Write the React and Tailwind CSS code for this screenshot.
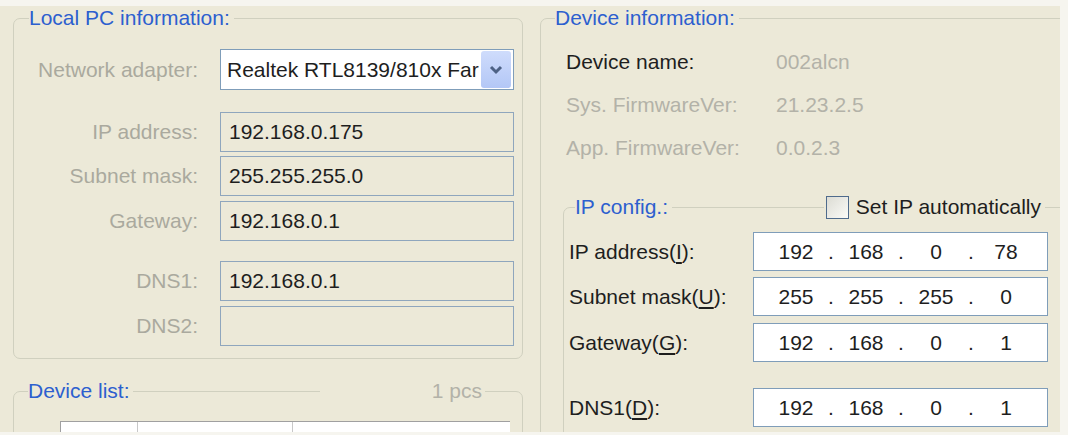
import React from "react";

function IpBox({ parts }) {
  return (
    <div className="ml-0 w-[295px] h-[39px] bg-white border border-[#7f9db9] flex items-center pl-[15px] text-[#1e1e1e]">
      <span className="w-[54px] text-center">{parts[0]}</span>
      <span className="w-[16px] text-center">.</span>
      <span className="w-[54px] text-center">{parts[1]}</span>
      <span className="w-[16px] text-center">.</span>
      <span className="w-[54px] text-center">{parts[2]}</span>
      <span className="w-[16px] text-center">.</span>
      <span className="w-[54px] text-center">{parts[3]}</span>
    </div>
  );
}

function LeftRow({ label, value, className = "" }) {
  return (
    <div className={"flex items-center " + className}>
      <span className="w-[184px] text-right text-[#aaa99e]">{label}</span>
      <div className="ml-[22px] w-[294px] h-[40px] border border-[#8fa6bd] bg-[#ECE9D8] flex items-center pl-[8px] text-[#1e1e1e]">
        {value}
      </div>
    </div>
  );
}

function IpRow({ label, mn, rest, parts, className = "" }) {
  return (
    <div className={"flex items-center " + className}>
      <span className="w-[184px] text-[#1e1e1e]">
        {label}
        <u className="underline-offset-[3px]">{mn}</u>
        {rest}
      </span>
      <IpBox parts={parts} />
    </div>
  );
}

export default function App() {
  return (
    <div className="w-[1068px] h-[435px] bg-[#f6f5ef] overflow-hidden font-['Liberation_Sans',Arial,sans-serif] text-[21px] leading-[24px]">
      <div className="mt-[6px] w-[1060px] h-[426px] bg-[#ECE9D8] overflow-hidden flex pl-[13px] gap-[17px]">
        {/* Left column */}
        <div className="w-[510px] shrink-0 flex flex-col">
          <fieldset className="m-0 p-0 pb-[12px] border border-[#d0d0bf] rounded-[7px] min-w-0">
            <legend className="ml-[15px] pr-[4px] text-[#2d5fcf]">Local PC information:</legend>
            <div className="flex items-center mt-[19px]">
              <span className="w-[184px] text-right text-[#aaa99e]">Network adapter:</span>
              <div className="ml-[22px] w-[294px] h-[41px] border border-[#7f9db9] bg-white flex items-center justify-between pl-[6px] pr-[2px] text-[#1e1e1e]">
                <span>Realtek RTL8139/810x Far</span>
                <div className="w-[30px] h-[37px] rounded-[3px] bg-gradient-to-b from-[#cfdcfc] to-[#b3c7f6] flex items-center justify-center">
                  <svg width="14" height="10" viewBox="0 0 14 10">
                    <polyline points="2,2 7,7 12,2" fill="none" stroke="#4d6185" strokeWidth="3" />
                  </svg>
                </div>
              </div>
            </div>
            <LeftRow label="IP address:" value="192.168.0.175" className="mt-[22px]" />
            <LeftRow label="Subnet mask:" value="255.255.255.0" className="mt-[4px]" />
            <LeftRow label="Gateway:" value="192.168.0.1" className="mt-[5px]" />
            <LeftRow label="DNS1:" value="192.168.0.1" className="mt-[20px]" />
            <LeftRow label="DNS2:" value="" className="mt-[5px]" />
          </fieldset>

          <fieldset className="mt-[20px] m-0 p-0 border border-[#d0d0bf] rounded-[7px] min-w-0 h-[120px]">
            <legend className="ml-[14px] w-[457px] flex items-center">
              <span className="text-[#2d5fcf]">Device list:</span>
              <div className="ml-[3px] w-[187px] h-px bg-[#d0d0bf]" />
              <div className="flex-1" />
              <span className="pr-[3px] text-[#b3b2a8]">1 pcs</span>
            </legend>
            <div className="mt-[18px] ml-[46px] w-[450px] h-[40px] bg-white border-t border-l border-[#a0a0a0] flex">
              <div className="w-[77px] h-full border-r border-[#c8c8c8]" />
              <div className="w-[155px] h-full border-r border-[#c8c8c8]" />
            </div>
          </fieldset>
        </div>

        {/* Right column */}
        <div className="w-[540px] shrink-0">
          <fieldset className="m-0 p-0 border border-[#d0d0bf] rounded-[7px] min-w-0 h-[440px]">
            <legend className="ml-[14px] pr-[4px] text-[#2d5fcf]">Device information:</legend>
            <div className="pl-[25px] flex flex-col">
              <div className="flex mt-[20px]">
                <span className="w-[210px] text-[#1e1e1e]">Device name:</span>
                <span className="text-[#b3b2a8]">002alcn</span>
              </div>
              <div className="flex mt-[19px]">
                <span className="w-[210px] text-[#b3b2a8]">Sys. FirmwareVer:</span>
                <span className="text-[#b3b2a8]">21.23.2.5</span>
              </div>
              <div className="flex mt-[19px]">
                <span className="w-[210px] text-[#b3b2a8]">App. FirmwareVer:</span>
                <span className="text-[#b3b2a8]">0.0.2.3</span>
              </div>
            </div>

            <fieldset className="ml-[22px] mt-[35px] m-0 p-0 border border-[#d0d0bf] rounded-[7px] min-w-0 h-[300px]">
              <legend className="ml-[11px] w-[490px] flex items-center">
                <span className="text-[#2d5fcf]">IP config.:</span>
                <div className="ml-[4px] flex-1 h-px bg-[#d0d0bf]" />
                <div className="ml-[2px] w-[23px] h-[23px] border border-[#4f6b8c] bg-gradient-to-br from-[#dcdcd4] to-[#fbfbf8]" />
                <span className="ml-[7px] mr-[4px] text-[#1e1e1e]">Set IP automatically</span>
                <div className="w-[20px] h-px bg-[#d0d0bf]" />
              </legend>
              <div className="px-[5px] flex flex-col">
                <IpRow label="IP address(" mn="I" rest="):" parts={["192", "168", "0", "78"]} className="mt-[13px]" />
                <IpRow label="Subnet mask(" mn="U" rest="):" parts={["255", "255", "255", "0"]} className="mt-[6px]" />
                <IpRow label="Gateway(" mn="G" rest="):" parts={["192", "168", "0", "1"]} className="mt-[7px]" />
                <IpRow label="DNS1(" mn="D" rest="):" parts={["192", "168", "0", "1"]} className="mt-[26px]" />
              </div>
            </fieldset>
          </fieldset>
        </div>
      </div>
    </div>
  );
}
